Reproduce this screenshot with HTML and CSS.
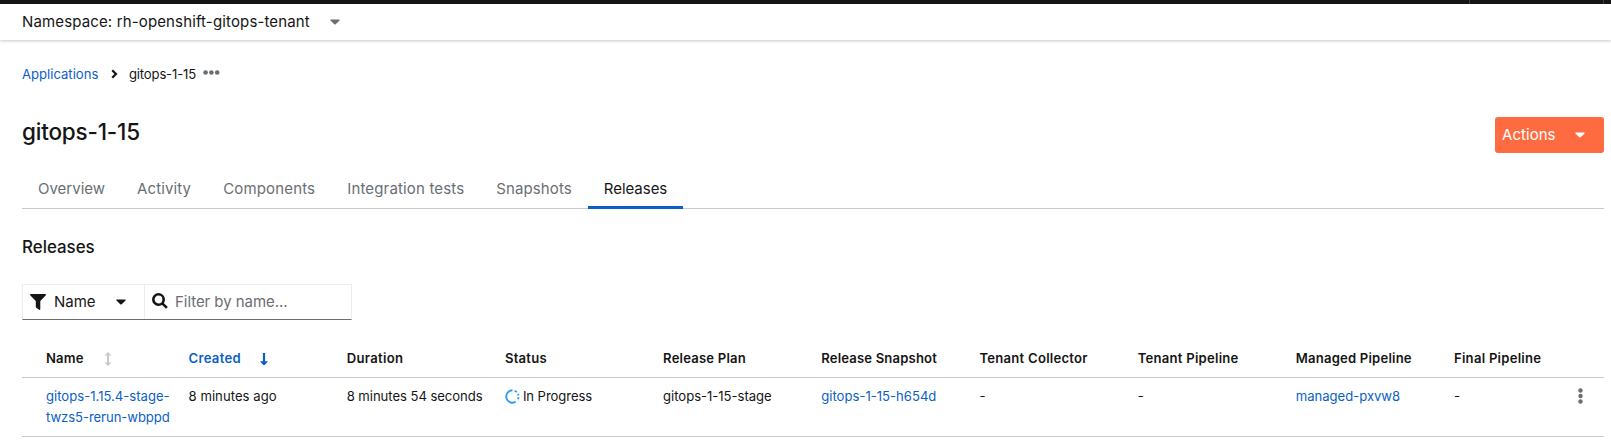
FILE: index.html
```html
<!DOCTYPE html>
<html lang="en">
<head>
<meta charset="utf-8">
<title>gitops-1-15 releases</title>
<link rel="stylesheet" href="styles.css">
</head>
<body>
<div class="masthead"><i></i><i></i></div>
<div class="namespace-bar">
  <span class="ls-p14">Namespace: rh-openshift-gitops-tenant</span>
  <svg class="caret" viewBox="0 0 10 6"><path d="M.9.4h8.2q1 .2.4 1L5.7 5.2q-.7.6-1.4 0L.5 1.4Q-.1.6.9.4z"/></svg>
</div>
<main>
  <nav class="breadcrumb">
    <a href="#" class="ls-0">Applications</a>
    <svg class="angle" viewBox="0 0 7 10"><path d="M1.2 1.2 5 5 1.2 8.8"/></svg>
    <span class="ls-m17">gitops-1-15</span>
    <svg class="ellipsis" viewBox="0 0 17 5"><circle cx="2.6" cy="2.5" r="2.3"/><circle cx="8.4" cy="2.5" r="2.3"/><circle cx="14.2" cy="2.5" r="2.3"/></svg>
  </nav>
  <header class="title-row">
    <h1>gitops-1-15</h1>
    <button class="actions"><span>Actions</span><svg class="caret" viewBox="0 0 10 6"><path d="M.9.4h8.2q1 .2.4 1L5.7 5.2q-.7.6-1.4 0L.5 1.4Q-.1.6.9.4z"/></svg></button>
  </header>
  <div class="tabs">
    <span class="tab ls-0">Overview</span>
    <span class="tab ls-p12">Activity</span>
    <span class="tab ls-p16">Components</span>
    <span class="tab ls-p16">Integration tests</span>
    <span class="tab ls-p10">Snapshots</span>
    <span class="tab active ls-m03">Releases</span>
  </div>
  <h2>Releases</h2>
  <div class="filter">
    <div class="filter-type">
      <svg class="funnel" viewBox="0 0 16 16"><path d="M.8 0h14.4q1.2.2.6 1.2L10.300 7v8.300q-.2 1-1.200.5L6.300 13.700q-.5-.4-.5-1V7L.2 1.200Q-.3.2.8 0z"/></svg>
      <span>Name</span>
      <svg class="caret" viewBox="0 0 10 6"><path d="M.9.4h8.2q1 .2.4 1L5.7 5.2q-.7.6-1.4 0L.5 1.4Q-.1.6.9.4z"/></svg>
    </div>
    <div class="filter-input">
      <svg class="search" viewBox="0 0 16 16"><circle cx="6.500" cy="6.500" r="5.200"/><path d="M10.300 10.300 14.900 14.900"/></svg>
      <span class="ls-m05">Filter by name...</span>
    </div>
  </div>
  <div class="table">
    <div class="row head">
      <span class="sort ls-p16">Name<svg viewBox="0 0 8 14"><path d="M4 0 7.500 3.600H5V10.400H7.500L4 14 .5 10.400H3V3.600H.5z"/></svg></span>
      <span class="sort sorted">Created<svg viewBox="0 0 8 14"><path d="M2.900 1h2.200v8.200h2.200q.6.2.2.9L4.400 13.200h-.8L.5 10.100q-.4-.7.2-.9h2.200z"/></svg></span>
      <span class="ls-p32">Duration</span>
      <span class="ls-p25">Status</span>
      <span class="ls-p19">Release Plan</span>
      <span class="ls-p16">Release Snapshot</span>
      <span class="ls-p25">Tenant Collector</span>
      <span class="ls-p25">Tenant Pipeline</span>
      <span class="ls-p19">Managed Pipeline</span>
      <span class="ls-p25">Final Pipeline</span>
      <span></span>
    </div>
    <div class="row">
      <a href="#"><span class="ls-0">gitops-1.15.4-stage-</span><br><span class="ls-m07">twzs5-rerun-wbppd</span></a>
      <span class="ls-p05">8 minutes ago</span>
      <span class="ls-m05">8 minutes 54 seconds</span>
      <span class="status"><svg class="progress" viewBox="0 0 15 15"><path d="M7.500 1.300A6.200 6.200 0 1 0 10.700 12.800"/><path class="dash" d="M9.700 1.700 11.800 3M13 4.800 13.600 6.400M13.600 8.400 13 10.200"/></svg><span class="ls-m07">In Progress</span></span>
      <span class="ls-m03">gitops-1-15-stage</span>
      <a href="#" class="ls-0">gitops-1-15-h654d</a>
      <span>-</span>
      <span>-</span>
      <a href="#" class="ls-m03">managed-pxvw8</a>
      <span>-</span>
      <svg class="kebab" viewBox="0 0 5 16"><circle cx="2.500" cy="2.500" r="2.200"/><circle cx="2.500" cy="8" r="2.200"/><circle cx="2.500" cy="13.500" r="2.200"/></svg>
    </div>
  </div>
</main>
</body>
</html>
```
FILE: styles.css
```css
* { box-sizing: border-box; }
body { margin: 0; background: #fff; color: #151515; font: 400 15px/24px Inter, "Liberation Sans", sans-serif; }
a { color: #0b5fc6; text-decoration: none; }
svg { display: block; flex: none; fill: currentColor; }
.caret { width: 10px; height: 6px; }

.masthead { height: 4px; background: #151515; display: flex; justify-content: flex-end; gap: 133px; padding-right: 7px; }
.masthead i { width: 1px; background: #3c3f42; }
.namespace-bar { height: 36px; display: flex; align-items: center; gap: 20px; padding: 0 22px; box-shadow: 0 1px 3px rgba(3,3,3,.22); }
.namespace-bar .caret { color: #6a6e73; }

main { padding: 23px 7px 0 22px; }
.breadcrumb { height: 22px; display: flex; align-items: center; font-size: 13.1px; line-height: 22px; }
.breadcrumb a { width: 77px; }
.angle { width: 7px; height: 10px; margin: 0 11px 0 12px; fill: none; stroke: #151515; stroke-width: 2.2; }
.ellipsis { width: 17px; height: 5px; margin: -3px 0 0 7px; color: #6a6e73; }

.title-row { display: flex; justify-content: space-between; align-items: flex-start; margin-top: 32px; height: 51px; }
h1 { margin: -1px 0 0; font-size: 22.5px; font-weight: 500; line-height: 31px; letter-spacing: -.2px; }
.actions { width: 109px; height: 36px; display: flex; align-items: center; justify-content: space-between; padding: 0 19px 0 7px; border: 0; border-radius: 3px; background: #ff6b40; color: #fff; font: inherit; letter-spacing: .05px; }

.tabs { display: flex; height: 41px; border-bottom: 1px solid #c9c9c9; color: #6a6e73; }
.tab { height: 41px; padding: 9px 16px 0; white-space: nowrap; }
.tab.active { color: #151515; border-bottom: 3px solid #0b5fc6; }

h2 { margin: 25px 0 0; font-size: 16.9px; font-weight: 500; line-height: 26px; letter-spacing: 0; }

.filter { width: 330px; height: 36px; margin-top: 24px; display: flex; border: 1px solid #ededed; border-bottom-color: #6a6e73; }
.filter-type { width: 122px; display: flex; align-items: center; padding: 0 18px 0 7px; border-right: 1px solid #ededed; }
.filter-type .caret { margin-left: auto; }
.filter-type span { margin-left: 8px; }
.funnel { width: 16px; height: 16px; }
.filter-input { display: flex; align-items: center; gap: 7px; padding-left: 7px; color: #6a6e73; }
.search { width: 16px; height: 16px; margin-top: -2px; fill: none; stroke: #151515; stroke-width: 2.6; }

.table { margin-top: 20px; font-size: 13.1px; line-height: 21px; }
.row { display: grid; grid-template-columns: 142.500px repeat(8, 158.200px) 110px 1fr; height: 59px; padding: 7.500px 0 0 24px; border-bottom: 1px solid #c9c9c9; }
.row.head { height: 38px; font-weight: 600; }
.sort { display: flex; gap: 20px; }
.sort svg { width: 8px; height: 14px; margin-top: 4px; color: #c7c7c7; }
.sorted { color: #0b5fc6; letter-spacing: .3px; }
.sorted svg { color: #0b5fc6; margin-left: -1px; }
.status { display: flex; }
.progress { width: 15px; height: 15px; margin: 3px 3px 0 0; fill: none; stroke: #2b9af3; stroke-width: 1.900; }
.kebab { width: 5px; height: 16px; margin: 2px 0 0 14px; color: #6a6e73; }

.ls-m17 { letter-spacing: -.17px; }
.ls-m07 { letter-spacing: -.07px; }
.ls-m05 { letter-spacing: -.05px; }
.ls-m03 { letter-spacing: -.03px; }
.ls-0 { letter-spacing: 0; }
.ls-p05 { letter-spacing: .05px; }
.ls-p10 { letter-spacing: .1px; }
.ls-p12 { letter-spacing: .12px; }
.ls-p14 { letter-spacing: .14px; }
.ls-p16 { letter-spacing: .16px; }
.ls-p19 { letter-spacing: .19px; }
.ls-p25 { letter-spacing: .25px; }
.ls-p32 { letter-spacing: .32px; }
```
